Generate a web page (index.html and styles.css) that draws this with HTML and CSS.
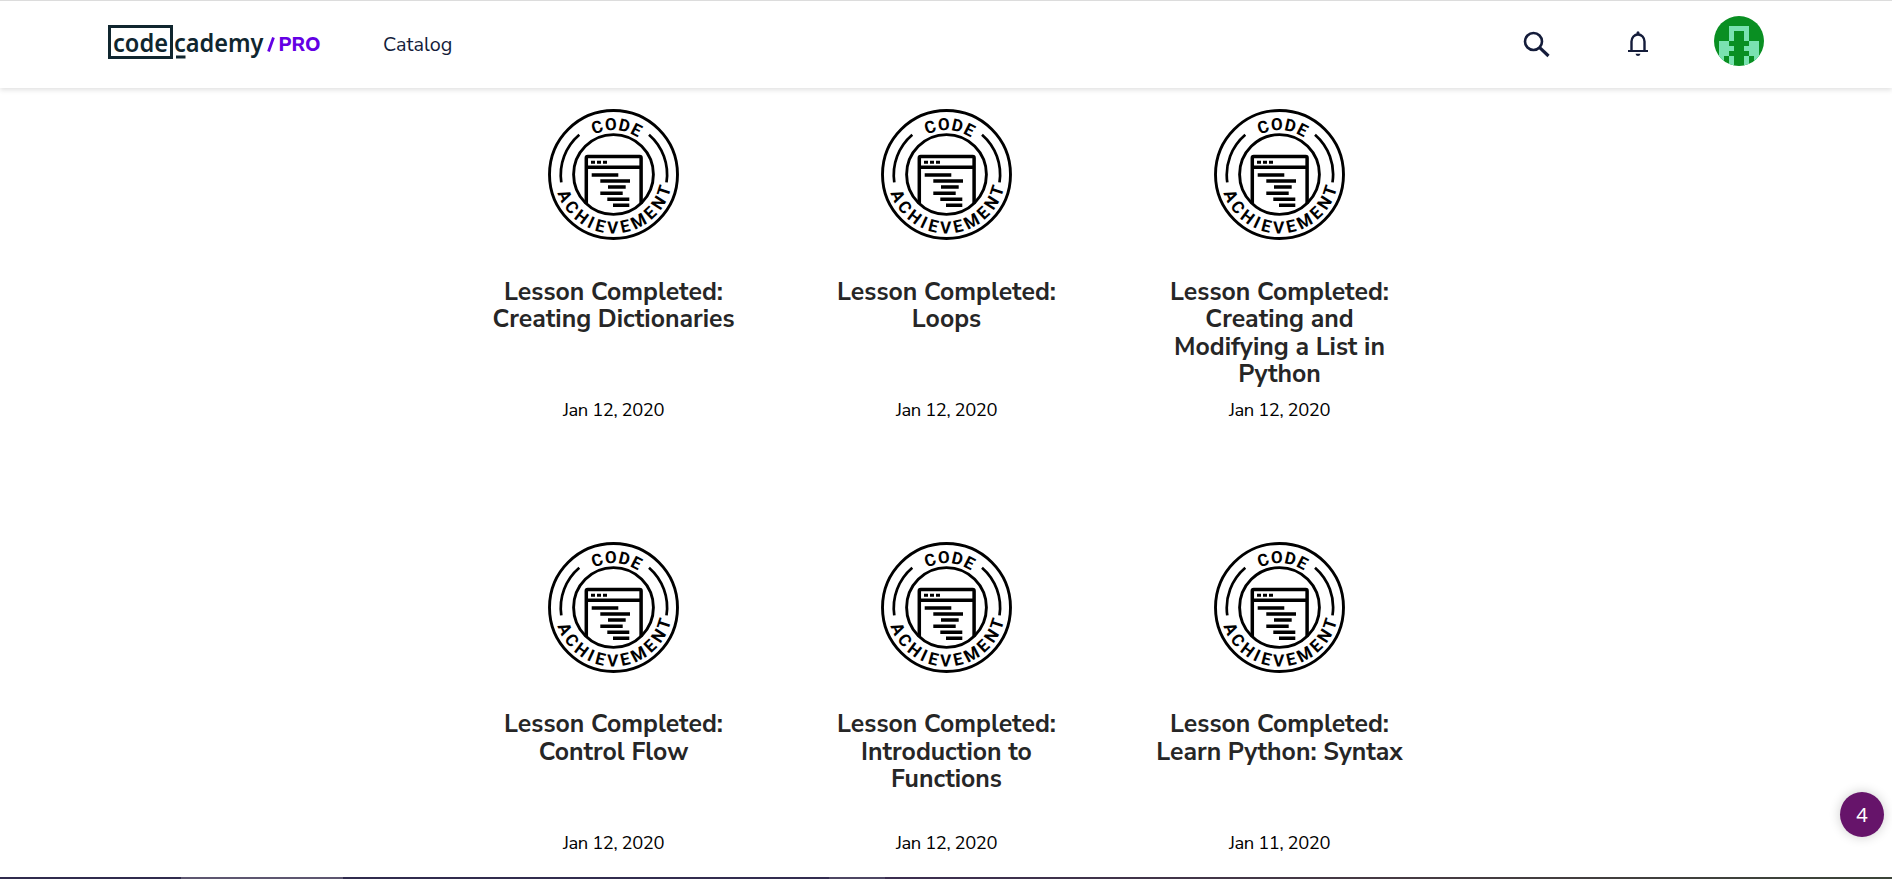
FILE: index.html
```html
<!DOCTYPE html>
<html lang="en">
<head>
<meta charset="utf-8">
<title>Achievements</title>
<link rel="stylesheet" href="styles.css">
</head>
<body>
<svg class="defs" width="0" height="0" aria-hidden="true">
  <symbol id="badge" viewBox="0 0 131 131">
    <path id="arc-top" d="M21.2 65.5A44.3 44.3 0 0 1 109.8 65.5" fill="none"/>
    <path id="arc-bottom" d="M6.5 65.5A59 59 0 0 0 124.5 65.5" fill="none"/>
    <g fill="none" stroke="#000" stroke-width="2.9">
      <circle cx="65.5" cy="65.5" r="64"/>
      <circle cx="65.5" cy="65.5" r="39.9"/>
      <path d="M13.3 73.4A52.6 52.6 0 0 1 31.3 25.7M101 25.7A52.6 52.6 0 0 1 118.5 73.4" stroke-width="2.7"/>
      <path d="M38.3 94.5V49q0-1.4 1.4-1.4H91.7q1.4 0 1.4 1.4V94.5M38.3 58.3H93.1" stroke-width="3.5"/>
    </g>
    <path d="M43 51.7h4v3h-4zM49 51.7h4v3h-4zM55 51.7h4v3h-4z"/>
    <path d="M43.7 66h26.6M52.3 72H82M60 78h17.7M52.3 84.3h22.4M59.3 90.3h22M65 96.3h16.3" stroke="#000" stroke-width="3.6"/>
    <text class="badge-text"><textPath href="#arc-top" startOffset="52%" text-anchor="middle" textLength="46">CODE</textPath></text>
    <text class="badge-text"><textPath href="#arc-bottom" startOffset="51.5%" text-anchor="middle" textLength="153">ACHIEVEMENT</textPath></text>
  </symbol>
</svg>

<header class="header">
  <a class="logo">
    <svg width="216" height="40" viewBox="0 0 216 40">
      <rect x="1.5" y="6.5" width="62" height="31" fill="none" stroke="#10262f" stroke-width="3"/>
      <text class="logo-word" x="5" y="31.5" textLength="55" lengthAdjust="spacingAndGlyphs">code</text>
      <text class="logo-word" x="66" y="31.5" textLength="89.5" lengthAdjust="spacingAndGlyphs">cademy</text>
      <path d="M68 37h9.5" stroke="#10262f" stroke-width="3"/>
      <path d="M160.500 31.5L165.5 17.5" stroke="#6400e4" stroke-width="2.8"/>
      <text class="logo-pro" x="170.5" y="31.3" textLength="42" lengthAdjust="spacingAndGlyphs">PRO</text>
    </svg>
  </a>
  <a class="nav-link">Catalog</a>
  <div class="tools">
    <svg class="search" width="28" height="28" viewBox="0 0 28 28" fill="none" stroke="#141c3a"><circle cx="10.5" cy="10.5" r="8.5" stroke-width="2.6"/><path d="M16.7 16.7L25.5 25" stroke-width="3.2"/></svg>
    <svg class="bell" width="20" height="26" viewBox="0 0 20 26" fill="#141c3a"><path d="M3.5 20V10.5A6.5 7 0 0 1 16.5 10.5V20" fill="none" stroke="#141c3a" stroke-width="2.4"/><path d="M8.5 1.7a1.5 1.5 0 0 1 3 0V4h-3zM0 19h20v2H0zM7.5 22.7h5q-.5 2.3-2.5 2.3t-2.5-2.3z"/></svg>
    <svg class="avatar" width="50" height="50" viewBox="0 0 50 50" shape-rendering="crispEdges"><rect width="50" height="50" fill="#098f22"/><path fill="#7ae2b1" d="M15 10h20v15h-5V15H20v10h-5zM5 25h10v5h5v5h-5v5h5v10h-5V40h-5v5H5zM45 25H35v5h-5v5h5v5h-5v10h5V40h5v5h5z"/></svg>
  </div>
</header>

<main class="grid">
  <article class="card"><svg class="badge"><use href="#badge"/></svg><h3 class="title">Lesson Completed:<br>Creating Dictionaries</h3><p class="date">Jan 12, 2020</p></article>
  <article class="card"><svg class="badge"><use href="#badge"/></svg><h3 class="title">Lesson Completed:<br>Loops</h3><p class="date">Jan 12, 2020</p></article>
  <article class="card"><svg class="badge"><use href="#badge"/></svg><h3 class="title">Lesson Completed:<br>Creating and<br>Modifying a List in<br>Python</h3><p class="date">Jan 12, 2020</p></article>
  <article class="card"><svg class="badge"><use href="#badge"/></svg><h3 class="title">Lesson Completed:<br>Control Flow</h3><p class="date">Jan 12, 2020</p></article>
  <article class="card"><svg class="badge"><use href="#badge"/></svg><h3 class="title">Lesson Completed:<br>Introduction to<br>Functions</h3><p class="date">Jan 12, 2020</p></article>
  <article class="card"><svg class="badge"><use href="#badge"/></svg><h3 class="title">Lesson Completed:<br>Learn Python: Syntax</h3><p class="date">Jan 11, 2020</p></article>
</main>

<div class="counter">4</div>
<div class="strip"></div>
</body>
</html>
```
FILE: styles.css
```css
* { box-sizing: border-box; }
body {
  margin: 0;
  height: 879px;
  overflow: hidden;
  background: #fff;
  font-family: "Nunito Sans", Nunito, "Noto Sans", sans-serif;
}
.defs { display: block; }
.header {
  display: flex;
  align-items: flex-start;
  height: 88px;
  padding: 0 128px 0 108px;
  border-top: 1px solid #dcdcdc;
  box-shadow: 0 2px 5px rgba(0, 0, 0, .12);
}
.logo { display: block; height: 40px; margin-top: 19px; }
.logo-word {
  font: 600 26px "Noto Sans", sans-serif;
  fill: #10262f;
}
.logo-pro {
  font: 800 19px "Nunito Sans", Nunito, sans-serif;
  fill: #6400e4;
}
.nav-link {
  margin: 31px 0 0 59px;
  font-size: 19.8px;
  line-height: 26px;
  color: #141c3a;
}
.tools { display: flex; align-items: flex-start; margin-left: auto; }
.search { margin: 30px 77px 0 0; }
.bell { margin: 30px 66px 0 0; }
.avatar { margin-top: 15px; border-radius: 50%; }
.grid {
  display: grid;
  grid-template-columns: repeat(3, 333px);
  grid-template-rows: 432.6px 337px;
  justify-content: center;
  padding: 21px 0 0 1px;
}
.card { display: flex; flex-direction: column; align-items: center; }
.badge { display: block; width: 131px; height: 131px; }
.badge-text { font: 700 17px Roboto, sans-serif; fill: #000; }
.title {
  height: 118.8px;
  margin: 38.7px 0 0;
  font-size: 24.8px;
  font-weight: 700;
  line-height: 27.4px;
  text-align: center;
  white-space: nowrap;
  color: #262626;
}
.date {
  margin: 0;
  font-size: 18.4px;
  font-weight: 400;
  line-height: 26px;
  letter-spacing: -.4px;
  color: #000;
}
.counter {
  position: absolute;
  left: 1840px;
  top: 792px;
  width: 44px;
  height: 45px;
  border-radius: 50%;
  background: #66146a;
  box-shadow: 0 0 12px rgba(0, 0, 0, .2);
  color: #fff;
  font-family: "Noto Sans", sans-serif;
  font-size: 20px;
  line-height: 46px;
  text-align: center;
}
.strip {
  position: absolute;
  left: 0;
  top: 877px;
  width: 100%;
  height: 2px;
  background: linear-gradient(90deg, #302b4d 181px, #5d5670 181px 343px, #302b4d 343px, #332c50 829px, #4d4663 829px 885px, #3b2d50 885px, #463a42 1400px, #3b4438 1892px);
}
```
